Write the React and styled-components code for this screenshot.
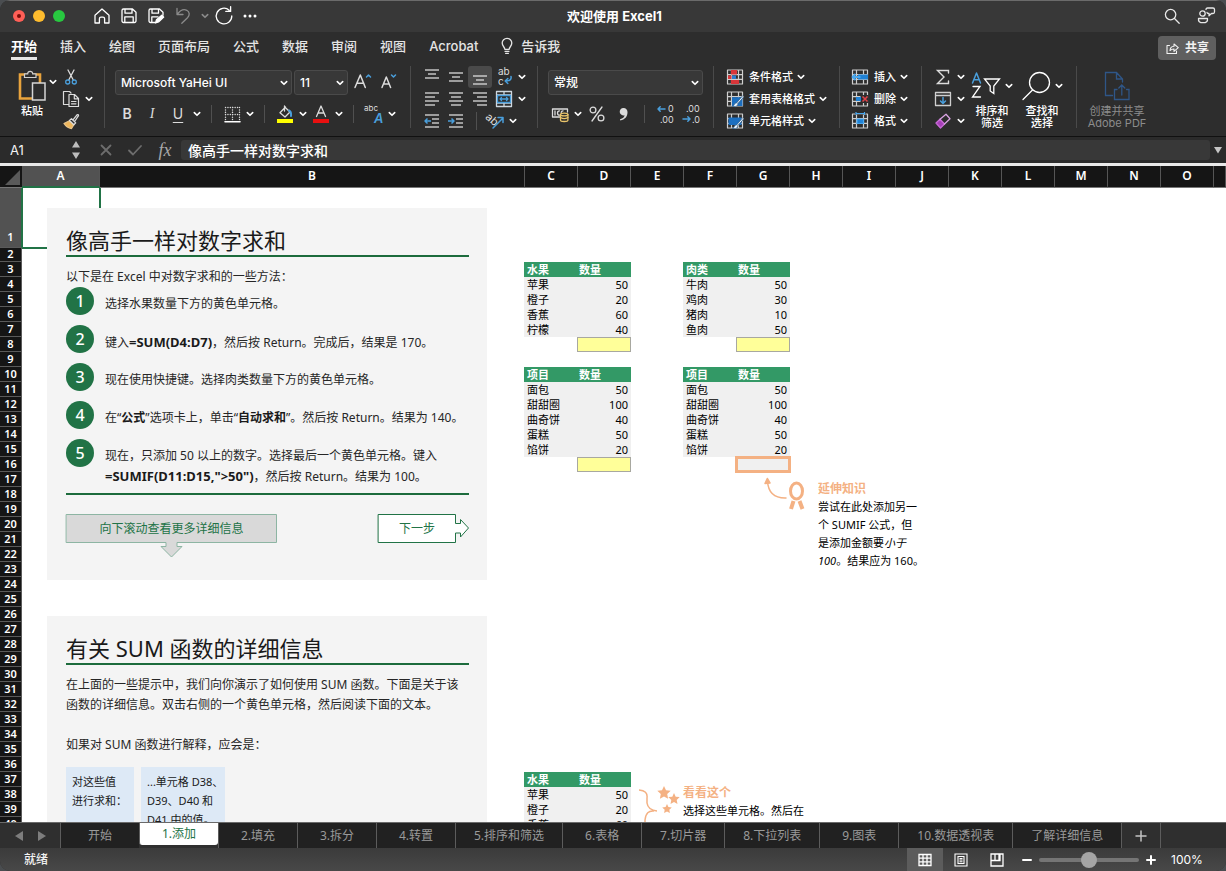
import React from 'react';
import styled, { createGlobalStyle, css } from 'styled-components';

const ui = 'Inter, "Noto Sans CJK SC", sans-serif';
const doc = '"Noto Sans", "Noto Sans CJK SC", sans-serif';
const green = '#217346';
const orange = '#f4b183';
const blue = '#4a9fdc';
const ink = '#dcdcdc';

const GlobalStyle = createGlobalStyle`
  *, *::before, *::after { box-sizing: border-box; }
  body { margin: 0; background: #4a4d50; font-family: ${ui}; }
  button, input, select { font: inherit; color: inherit; margin: 0; }
  button { background: none; border: 0; padding: 0; cursor: default; }
  svg { display: block; flex: none; }
  p, h1, h2, h3, ol { margin: 0; padding: 0; }
`;

const Window = styled.div`
  height: 100vh;
  display: flex;
  flex-direction: column;
  overflow: hidden;
  border-radius: 10px;
  background: #2d2d2d;
  color: #f2f2f2;
`;

/* ---------- title bar ---------- */
const TitleBar = styled.header`
  flex: none;
  height: 32px;
  display: grid;
  grid-template-columns: 1fr auto 1fr;
  align-items: center;
  padding: 0 10px 0 13px;
  background: #383838;
  box-shadow: inset 0 1px #6b6b6b;
`;
const TitleSide = styled.div`
  display: flex;
  align-items: center;
  gap: ${p => p.$gap || 8}px;
  justify-content: ${p => (p.$end ? 'flex-end' : 'flex-start')};
`;
const Title = styled.h1`
  font-size: 13px;
  line-height: 20px;
  font-weight: 700;
  color: #fff;
`;
const Light = styled.button`
  width: 12px;
  height: 12px;
  border-radius: 50%;
  background: ${p => p.$color};
  display: grid;
  place-items: center;
  &::after {
    content: '';
    width: 4px;
    height: 4px;
    border-radius: 50%;
    background: ${p => p.$dot || 'transparent'};
  }
`;
const QuickTools = styled.div`
  display: flex;
  align-items: center;
  gap: 9px;
  margin-left: 20px;
`;
const Tool = styled.button`
  flex: none;
  width: ${p => p.$w || 24}px;
  height: ${p => p.$h || 22}px;
  display: grid;
  place-items: center;
  border-radius: 3px;
  color: ${p => p.$color || ink};
  ${p => p.$on && css`background: #4a4a4a;`}
`;
const Letter = styled.span`
  font-size: 14px;
  line-height: 20px;
  font-weight: ${p => p.$weight || 500};
  font-style: ${p => (p.$italic ? 'italic' : 'normal')};
  font-family: ${p => (p.$serif ? '"Liberation Serif", serif' : ui)};
  text-decoration: ${p => (p.$underline ? 'underline' : 'none')};
  text-underline-offset: 3px;
`;
const FxLabel = styled.span`
  font: italic 18px/20px "Liberation Serif", serif;
`;

/* ---------- ribbon ---------- */
const TabRow = styled.nav`
  flex: none;
  height: 34px;
  display: flex;
  align-items: center;
  justify-content: space-between;
  padding: 0 10px 6px 11px;
`;
const TabList = styled.div`
  display: flex;
  gap: 23px;
`;
const RibbonTab = styled.button`
  display: flex;
  align-items: center;
  gap: 8px;
  height: 28px;
  border-bottom: 3px solid ${p => (p.$on ? '#e6e6e6' : 'transparent')};
  border-top: 3px solid transparent;
  font-size: 13px;
  line-height: 20px;
  font-weight: ${p => (p.$on ? 700 : 500)};
  color: ${p => (p.$on ? '#fff' : '#e4e4e4')};
`;
const ShareButton = styled.button`
  display: flex;
  align-items: center;
  gap: 6px;
  height: 24px;
  margin-top: 4px;
  padding: 0 7px 0 8px;
  border-radius: 4px;
  background: #5f5f5f;
  font-size: 12px;
  line-height: 20px;
  font-weight: 700;
`;
const Ribbon = styled.section`
  flex: none;
  display: flex;
  height: 70px;
`;
const Group = styled.div`
  flex: none;
  display: flex;
  flex-direction: ${p => (p.$column ? 'column' : 'row')};
  width: ${p => p.$w}px;
  padding-left: ${p => p.$pad}px;
`;
const GroupRule = styled.div`
  flex: none;
  width: 1px;
  height: 62px;
  background: #4a4a4a;
`;
const Line = styled.div`
  display: flex;
  align-items: center;
  height: ${p => (p.$tall ? 32 : 22)}px;
`;
const Stack = styled.div`
  display: flex;
  flex-direction: column;
`;
const Rule = styled.i`
  width: 1px;
  height: 18px;
  margin: 0 8px;
  background: #505050;
`;
const BigButton = styled.button`
  display: flex;
  flex-direction: column;
  align-items: center;
  gap: 4px;
  width: ${p => p.$w}px;
  height: 66px;
  padding-top: 4px;
  font-size: 11px;
  line-height: 12px;
  font-weight: ${p => (p.$dim ? 400 : 500)};
  color: ${p => (p.$dim ? '#8c8c8c' : '#fff')};
  white-space: pre-line;
`;
const BigArt = styled.span`
  display: flex;
  align-items: center;
  gap: 4px;
  height: 31px;
`;
const TextTool = styled.button`
  display: flex;
  align-items: center;
  gap: 5px;
  height: 22px;
  font-size: 11px;
  line-height: 16px;
  font-weight: 500;
  color: #fff;
  & > span { display: flex; align-items: center; gap: 4px; }
`;
const Picker = styled.label`
  position: relative;
  flex: none;
  width: ${p => p.$w}px;
  height: 25px;
  margin-right: 2px;
  select {
    appearance: none;
    width: 100%;
    height: 100%;
    padding: 0 18px 0 5px;
    border: 1px solid #4a4a4a;
    border-radius: 3px;
    background: #383838;
    color: #fff;
    font-size: 12px;
    font-weight: 500;
  }
  svg {
    position: absolute;
    right: 4px;
    top: 9px;
    pointer-events: none;
  }
`;

/* ---------- formula bar ---------- */
const FormulaBar = styled.section`
  flex: none;
  display: flex;
  align-items: center;
  height: 27px;
  border-top: 1px solid #111;
  background: #2b2b2b;
`;
const NameBox = styled.input`
  width: 60px;
  height: 24px;
  padding: 0 0 0 10px;
  border: 0;
  background: none;
  font-size: 13px;
`;
const Spinner = styled.button`
  width: 32px;
  height: 24px;
  display: grid;
  place-items: center;
`;
const FormulaInput = styled.input`
  flex: 1;
  min-width: 0;
  height: 20px;
  margin-left: 1px;
  padding: 0 7px;
  border: 0;
  border-radius: 3px;
  background: #383838;
  color: #fff;
  font-size: 14px;
  font-weight: 500;
`;

/* ---------- worksheet ---------- */
const Sheet = styled.main`
  flex: 1;
  min-height: 0;
  display: flex;
  flex-direction: column;
  overflow: hidden;
  border-top: 3px solid #e8e8e8;
  background: #fff;
  color: #000;
  font-family: ${doc};
`;
const ColumnHeads = styled.div`
  flex: none;
  display: flex;
  height: 22px;
  background: #151515;
  border-bottom: 1px solid #777;
`;
const Corner = styled.button`
  width: 22px;
  display: grid;
  place-items: end;
  padding: 0 2px 2px 0;
`;
const ColumnHead = styled.div`
  flex: ${p => (p.$w ? 'none' : '1')};
  width: ${p => (p.$w ? p.$w + 'px' : 'auto')};
  height: 22px;
  border-right: 1px solid #555;
  border-bottom: 2px solid ${p => (p.$on ? green : 'transparent')};
  background: ${p => (p.$on ? '#525252' : 'transparent')};
  background-clip: padding-box;
  color: #fff;
  font-size: 12px;
  line-height: 20px;
  font-weight: 600;
  text-align: center;
`;
const SheetBody = styled.div`
  flex: 1;
  min-height: 0;
  display: flex;
  align-items: flex-start;
`;
const RowHeads = styled.div`
  flex: none;
  width: 22px;
  background: #151515;
`;
const RowHead = styled.div`
  display: flex;
  align-items: flex-end;
  justify-content: center;
  height: ${p => p.$h}px;
  padding-bottom: ${p => (p.$on ? 3 : 0)}px;
  border-bottom: 1px solid #5a5a5a;
  border-right: 1px solid ${p => (p.$on ? green : '#5a5a5a')};
  background: ${p => (p.$on ? '#525252' : 'transparent')};
  color: #fff;
  font-size: 11px;
  line-height: 14px;
  font-weight: 600;
`;
const Cells = styled.div`
  position: relative;
  flex: 1;
  display: flex;
`;
const ActiveCell = styled.div`
  position: absolute;
  left: 0;
  top: 0;
  width: 79px;
  height: 61px;
  border: 2px solid ${green};
  border-top: 0;
  border-left-width: 1px;
`;
const Cards = styled.div`
  position: relative;
  flex: none;
  width: 502px;
  padding: 20px 37px 0 25px;
  display: flex;
  flex-direction: column;
  gap: 36px;
`;
const Card = styled.article`
  background: #f4f4f4;
  padding: 17px 18px 37px 19px;
  color: #262626;
  font-size: 12px;
  line-height: 20px;
`;
const CardTitle = styled.h2`
  margin-bottom: 10px;
  border-bottom: 2px solid #1c6b3c;
  color: #1a1a1a;
  font-size: 22px;
  line-height: 30px;
  font-weight: 400;
`;
const Steps = styled.ol`
  list-style: none;
  display: flex;
  flex-direction: column;
  gap: 10px;
  padding-bottom: 6px;
  border-bottom: 2px solid #1c6b3c;
`;
const Step = styled.li`
  display: flex;
  align-items: flex-start;
  gap: 11px;
  strong { color: #1a1a1a; }
  p { padding-top: 7px; }
`;
const Formula = styled.strong`
  font-size: 13px;
  white-space: nowrap;
`;
const Badge = styled.span`
  flex: none;
  width: 28px;
  height: 28px;
  border-radius: 50%;
  background: ${green};
  color: #fff;
  font-size: 16px;
  line-height: 28px;
  font-weight: 500;
  text-align: center;
`;
const CardActions = styled.div`
  display: flex;
  justify-content: space-between;
  margin-top: 19px;
`;
const ShapeButton = styled.button`
  position: relative;
  width: ${p => p.$w}px;
  height: 29px;
  padding-right: ${p => p.$tail || 0}px;
  color: ${green};
  svg { position: absolute; left: 0; top: 0; }
  span { position: relative; }
`;
const Boxes = styled.div`
  display: flex;
  gap: 7px;
  margin-top: 12px;
`;
const Box = styled.p`
  width: ${p => p.$w}px;
  min-height: 78px;
  padding: 5px 0 5px 6px;
  background: #dde9f6;
  color: #1a1a1a;
  font-size: 11px;
  line-height: 19px;
  white-space: pre-line;
`;
const DataArea = styled.div`
  padding-top: 74px;
  display: flex;
  flex-direction: column;
`;
const DataRow = styled.div`
  display: flex;
  align-items: flex-start;
  gap: ${p => p.$gap}px;
  margin-bottom: 15px;
`;
const Table = styled.table`
  width: 107px;
  table-layout: fixed;
  border-spacing: 0;
  font-size: 11px;
  line-height: 15px;
  th, td { height: 15px; padding: 0 3px; white-space: nowrap; text-align: left; }
  th { background: #339966; color: #fff; font-weight: 700; }
  th:first-child { width: 53px; }
  th + th { padding-left: 2px; }
  td { background: #f0f0f0; }
  td + td { text-align: right; }
`;
const BlankCell = styled.td`
  && { background: #fff; }
`;
const TotalCell = styled.td`
  && { background: ${p => (p.$hint ? '#f0f0f0' : '#ffff99')}; }
  outline: ${p => (p.$hint ? `3px solid ${orange}` : '1px solid #a8a8a0')};
  outline-offset: ${p => (p.$hint ? -2 : -1)}px;
`;
const TipRow = styled.aside`
  display: flex;
  align-items: flex-start;
  gap: 12px;
  height: 285px;
  margin: -11px 0 11px;
  padding: 0 0 0 240px;
`;
const Tip = styled.div`
  padding-top: 3px;
  font-size: 11px;
  line-height: 18px;
  white-space: nowrap;
  h3 { color: ${orange}; font-size: 12px; line-height: 19px; font-weight: 700; }
  em { font-style: italic; }
`;
const LookHere = styled.aside`
  display: flex;
  align-items: flex-start;
  gap: 1px;
  padding-top: 8px;
`;

/* ---------- sheet tabs and status ---------- */
const SheetTabs = styled.nav`
  flex: none;
  display: flex;
  height: 26px;
  border-top: 1px solid #6a6a6a;
  background: #2f2f2f;
`;
const TabArrows = styled.div`
  flex: none;
  width: 60px;
  display: flex;
  align-items: center;
  justify-content: center;
`;
const SheetTab = styled.button`
  flex: none;
  min-width: ${p => p.$min || 79}px;
  height: ${p => (p.$on ? 22 : 25)}px;
  padding: 0 ${p => (p.$plain ? 14 : 18)}px;
  border-left: 1px solid #5c5c5c;
  border-radius: ${p => (p.$on ? '0 0 3px 3px' : '0')};
  background: ${p => (p.$on ? '#fff' : p.$plain ? '#2f2f2f' : '#212121')};
  color: ${p => (p.$on ? green : '#9a9a9a')};
  font-family: ${doc};
  font-size: 12px;
  line-height: 22px;
  display: grid;
  place-items: center;
`;
const TabFill = styled.div`
  flex: 1;
  border-left: 1px solid #5c5c5c;
`;
const StatusBar = styled.footer`
  flex: none;
  display: flex;
  align-items: center;
  justify-content: space-between;
  height: 23px;
  padding: 0 22px 0 24px;
  background: linear-gradient(#3b3b3b, #484848);
  font-size: 12px;
  line-height: 20px;
  font-weight: 500;
`;
const StatusTools = styled.div`
  display: flex;
  align-items: center;
  color: #fff;
`;
const ViewButton = styled.button`
  width: 36px;
  height: 23px;
  display: grid;
  place-items: center;
  background: ${p => (p.$on ? '#5c5c5c' : 'transparent')};
`;
const Zoom = styled.input`
  appearance: none;
  width: 100px;
  height: 16px;
  background: transparent;
  &::-webkit-slider-runnable-track { height: 4px; border-radius: 2px; background: #757575; }
  &::-webkit-slider-thumb {
    appearance: none;
    width: 16px;
    height: 16px;
    margin-top: -6px;
    border-radius: 50%;
    background: #a5a5a5;
  }
`;
const ZoomValue = styled.output`
  margin-left: 8px;
  width: 33px;
  font-weight: 400;
`;

/* ---------- drawings ---------- */
const Svg = ({ w = 18, h = w, children, ...rest }) => (
  <svg width={w} height={h} viewBox={`0 0 ${w} ${h}`} fill="none" stroke="currentColor" overflow="visible"
    strokeWidth="1.3" strokeLinecap="round" strokeLinejoin="round" aria-hidden="true" {...rest}>
    {children}
  </svg>
);
const Chevron = ({ color = '#fff' }) => (
  <Svg w={8} stroke={color} strokeWidth="1.6"><path d="M1.3 2.6 4 5.3l2.7-2.7" /></Svg>
);
const Drop = ({ label, color, w = 12 }) => (
  <Tool $w={w} aria-label={label}><Chevron color={color} /></Tool>
);
const HomeIcon = () => (
  <Svg w={18} stroke="#fff"><path d="M2 8.2 9 2l7 6.200V16h-4.400v-4.200a1.600 1.600 0 0 0-1.600-1.600H8a1.600 1.600 0 0 0-1.600 1.600V16H2z" /></Svg>
);
const SaveIcon = ({ pen }) => (
  <Svg w={18} stroke="#fff">
    <path d={pen ? 'M8 15.5H3.500A1.500 1.500 0 0 1 2 14V3.500A1.500 1.500 0 0 1 3.500 2h9L16 5.200v3M5 2.200v4h6.500v-4M4.800 15.300v-5.500H11' : 'M2 3.500A1.500 1.500 0 0 1 3.500 2h9L16 5.200V14a1.500 1.500 0 0 1-1.500 1.500h-11A1.500 1.500 0 0 1 2 14zM5 2.200v4h7v-4M4.800 15.300v-5.500h8.400v5.500'} />
    {pen && <path d="m8.500 16 1-3.200 5.300-4.600 1.900 1.900-5.200 4.900z" fill="#fff" />}
  </Svg>
);
const UndoIcon = () => (
  <Svg w={18} stroke="#8a8a8a"><path d="M3 1.500v6h6M3.300 7.200C6 3.600 9.800 1.800 12.800 3.300c3.200 1.700 3 5 .7 7.400L7.800 16.300" /></Svg>
);
const RedoIcon = () => (
  <Svg w={20} stroke="#fff"><path d="M17.800 10a7.800 7.800 0 1 1-2.600-5.800M11.800 5.400h4.800V.6" /></Svg>
);
const DotsIcon = () => (
  <Svg w={16} stroke="none" fill="#fff"><circle cx="3" cy="8" r="1.500" /><circle cx="8" cy="8" r="1.500" /><circle cx="13" cy="8" r="1.500" /></Svg>
);
const SearchIcon = () => (
  <Svg w={18} stroke="#e8e8e8"><circle cx="7.600" cy="7.600" r="5.200" /><path d="m11.500 11.500 4.700 4.700" /></Svg>
);
const PresenceIcon = () => (
  <Svg w={20} stroke="#e8e8e8">
    <circle cx="6.500" cy="7.500" r="2.700" />
    <path d="M2.500 12.500h9q.6 4.200-4.500 4.200t-4.500-4.200zM10 3.500q0-1.500 1.500-1.500h5.500q1.500 0 1.500 1.500V6q0 1.500-1.500 1.500h-1.500L13 9.800V7.500q-2 0-2-1" />
  </Svg>
);
const BulbIcon = () => (
  <Svg w={12} h={18}><path d="M3.800 12.300c0-2.300-2.600-3-2.600-6.200a4.800 4.800 0 0 1 9.600 0c0 3.200-2.600 3.900-2.600 6.200zM4 14.300h4M4.600 16.300h2.800" /></Svg>
);
const ShareIcon = () => (
  <Svg w={13} h={14} strokeWidth="1.100"><path d="M3.500 4.500H1v8h9.500V10M4 9.500q.3-4 4-4.200V3l4.300 3.700L8 10.300V8Q5.500 8 4 9.500z" /></Svg>
);
const PasteIcon = () => (
  <Svg w={28} h={31} strokeWidth="1.200" strokeLinejoin="miter">
    <path d="M2 4.500h20v24H2z" stroke="#e8a33d" strokeWidth="2.600" />
    <path d="M6.500 7.500V3.800h3.200a2.500 2.500 0 0 1 5 0h3.300v3.700z" fill="#2d2d2d" stroke="#cfcfcf" />
    <path d="M14.500 13h12.500v17H14.500z" fill="#2d2d2d" stroke="#d6d6d6" strokeWidth="1.500" />
  </Svg>
);
const CutIcon = () => (
  <Svg w={18}><path d="M6 2l5.300 10M12 2 6.700 12" /><g stroke={blue}><circle cx="5.700" cy="14" r="2" /><circle cx="12.300" cy="14" r="2" /></g></Svg>
);
const CopyIcon = () => (
  <Svg w={18}><path d="M7 14.500H1.500v-13h6L9 3M7 4.500h5.500l4 4v8H7zM12.300 4.800v4h4M9.500 11.500h4.500M9.500 13.800h4.500" strokeWidth="1.200" /></Svg>
);
const BrushIcon = () => (
  <Svg w={18}>
    <path d="M2 11.500 8 8.500l4 4-2.500 4q-4.500-.5-7.500-5z" fill="#eeb65c" stroke="#e8c48a" />
    <path d="m7.500 8.500 2-1.800 4.200 4.200-1.900 1.900zM11 7.800l4-5q1.300-.8 1.500.8L12.600 9.500" fill="#2d2d2d" />
  </Svg>
);
const BorderIcon = () => (
  <Svg w={17}><path d="M1.500 1.500h14M1.500 8.500h14M1.500 1.500v12M8.500 1.500v12M15.500 1.500v12" strokeDasharray=".1 2.300" strokeWidth="1.400" /><path d="M1 15.800h15" stroke="#fff" strokeWidth="1.600" /></Svg>
);
const FillIcon = () => (
  <Svg w={18}><path d="M9.500 2 4 7.800 9 12l5-5-4.500-4.200M8.500 1v5" /><path d="M13 5.500q2.500 1 2 5.500" stroke={blue} strokeWidth="2" /><path d="M1 14h16v4H1z" fill="#ffff00" stroke="none" /></Svg>
);
const FontColorIcon = () => (
  <Svg w={18}><path d="M4.500 11.500 9 1l4.500 10.500M6 8h6" /><path d="M1 14h16v4H1z" fill="#e81010" stroke="none" /></Svg>
);
const SizeIcon = ({ down }) => (
  <Svg w={20}>
    <path d={down ? 'M3 15.500 7.300 5l4.300 10.500M4.500 12h5.700' : 'M2 15.500 7.300 3l5 12.500M3.800 11.300h7'} strokeWidth="1.500" />
    <path d={down ? 'm12.500 3 2 2 2-2' : 'm13.500 5 2-2 2 2'} stroke={blue} strokeWidth="1.500" />
  </Svg>
);
const PhoneticIcon = () => (
  <Svg w={20} stroke="none" fill="currentColor">
    <text x="0" y="7" fontSize="8" fontFamily="Inter">abc</text>
    <text x="10" y="19" fontSize="13" fontFamily="Inter" fontStyle="italic" fontWeight="600" fill={blue}>A</text>
  </Svg>
);
const aligns = {
  top: [[1, 15, 1], [4, 12, 5], [1, 15, 9]],
  middle: [[1, 15, 4], [4, 12, 8], [1, 15, 12]],
  bottom: [[1, 15, 7], [4, 12, 11], [1, 15, 15]],
  left: [[1, 15, 2], [1, 11, 6], [1, 15, 10], [1, 11, 14]],
  center: [[1, 15, 2], [3, 13, 6], [1, 15, 10], [3, 13, 14]],
  right: [[1, 15, 2], [5, 15, 6], [1, 15, 10], [5, 15, 14]],
  indent: [[1, 15, 2], [8, 15, 6], [8, 15, 10], [1, 15, 14]],
};
const AlignIcon = ({ kind, arrow }) => (
  <Svg w={16} strokeLinecap="butt">
    {aligns[kind].map(([a, b, y]) => <path key={y} d={`M${a} ${y}h${b - a}`} />)}
    {arrow && <path stroke={blue} strokeWidth="1.500" d={arrow === 'out' ? 'M7 8H1M3.500 5.500 1 8l2.500 2.500' : 'M0 8h6M3.500 5.500 6 8l-2.500 2.500'} />}
  </Svg>
);
const WrapIcon = () => (
  <Svg w={18}>
    <g stroke="none" fill="currentColor" fontFamily="Inter" fontSize="10"><text x="3" y="7">ab</text><text x="3" y="17">c</text></g>
    <path d="M16 8.500q1 4.500-5.500 4.500M12.800 10.500 10.200 13l2.600 2.500" stroke={blue} strokeWidth="1.500" />
  </Svg>
);
const MergeIcon = () => (
  <Svg w={18} stroke="#cfd8e0"><path d="M1.500 1.500h15v15h-15zM1.500 5h15M1.500 13h15M9 1.500V5M9 13v3.500" /><path d="M2.500 5.500h13v7h-13z" fill="#2d2d2d" stroke={blue} /><path d="M5 9h8M6.500 7.500 5 9l1.500 1.500M11.500 7.500 13 9l-1.500 1.500" stroke={blue} /></Svg>
);
const OrientIcon = () => (
  <Svg w={20}>
    <text x="0" y="12" fontSize="11" fontFamily="Inter" stroke="none" fill="currentColor" transform="rotate(42 6 8)">ab</text>
    <path d="m7 17 9.500-9.500M12 6.500h5v5" stroke={blue} strokeWidth="1.500" />
  </Svg>
);
const CurrencyIcon = () => (
  <Svg w={18}>
    <path d="M9 12H1.500V4h15v3M4 6v4M8.500 5.800q-2 0-2 2.200t2 2.200M12 5.800q-1.500 0-1.800 1.500" />
    <path d="M9.500 9.500v5.800q0 1.200 3.700 1.200t3.700-1.200V9.500" fill="#2d2d2d" stroke="#e9c46a" />
    <g stroke="#e9c46a"><ellipse cx="13.200" cy="9.500" rx="3.700" ry="1.400" fill="#2d2d2d" /><path d="M9.500 12.500q3.700 2.200 7.400 0" /></g>
  </Svg>
);
const PercentIcon = () => (
  <Svg w={18}><circle cx="5" cy="5" r="2.900" /><circle cx="13" cy="13" r="2.900" /><path d="M14 2 4 16" /></Svg>
);
const CommaIcon = () => (
  <Svg w={14} h={18} stroke="none" fill="currentColor"><path d="M7.500 3A3.900 3.900 0 0 1 11.500 7.200c0 4.300-2.500 7.300-7.200 8.300l-.3-1.300c3-.8 4.300-2 4.600-4A3.700 3.700 0 1 1 7.500 3z" /></Svg>
);
const DecimalIcon = ({ less }) => (
  <Svg w={20} stroke="none" fill="currentColor">
    <g fontFamily="Inter" fontSize="9">
      <text x={less ? 4 : 12} y="8">{less ? '.00' : '0'}</text>
      <text x={less ? 10 : 4} y="19">{less ? '.0' : '.00'}</text>
    </g>
    <path fill="none" stroke={blue} strokeWidth="1.500" d={less ? 'M1 15h7M5.800 12.800 8 15l-2.200 2.200' : 'M9 5H2M4.200 2.800 2 5l2.200 2.200'} />
  </Svg>
);
const Grid = ({ children, stroke = '#cfcfcf' }) => (
  <Svg w={18} strokeWidth="1.200" stroke={stroke} strokeLinecap="butt">
    <path d="M1.500 2h15v14h-15zM1.500 6.700h15M1.500 11.400h15M5.500 2v14M12.500 2v14" />
    {children}
  </Svg>
);
const CondIcon = () => (
  <Grid><g stroke="none"><path d="M5 2h6v4.500H5zM5 12h8v4H5z" fill="#d8363a" /><path d="M6 7.500h4v3.500H6z" fill="#2a7bd0" /><path d="M2 7.500h3.500v3.500H2z" fill="#d8363a" /></g></Grid>
);
const Pen = () => (
  <path d="M16.800 5.500 10.500 13q-1.300-.3-2 1-.6 2-2.200 2.400 3.500 1 5.200-.9.500-1 .2-1.700l6-6.800" fill="#eaf3fb" stroke="#2d5e8c" strokeWidth=".8" />
);
const TableStyleIcon = () => (
  <Grid><path d="M6 7.200h10.500V16H6z" fill="#1c6fc0" stroke="none" /><Pen /></Grid>
);
const CellStyleIcon = () => (
  <Grid><path d="M2.500 5.500h13V13h-13z" fill="#1c6fc0" stroke="none" /><Pen /></Grid>
);
const InsertIcon = () => (
  <Grid><path d="M7 6.500h10v5H7z" fill="#1f82d6" stroke="none" /><path d="M9.500 9H1.500M4.500 6 1.500 9l3 3" stroke="#4aa8ee" strokeWidth="1.800" /></Grid>
);
const DeleteIcon = () => (
  <Grid><path d="M9.500 5h8v8h-8z" fill="#2d2d2d" stroke="none" /><path d="M5 7h5v4H5z" fill="#1f82d6" stroke="none" /><path d="m11.500 6.500 5 5M16.500 6.500l-5 5" stroke="#e0434a" strokeWidth="1.600" /></Grid>
);
const FormatIcon = () => (
  <Grid><path d="M6 7h6.500v4.500H6z" fill="#1f82d6" stroke="#4aa8ee" /><path d="M4 1h10.500" stroke="#2d2d2d" strokeWidth="3" /><path d="M5 1.500h8.500M5 0v3M13.500 0v3" stroke="#4aa8ee" /></Grid>
);
const SumIcon = () => (
  <Svg w={16} strokeLinejoin="miter"><path d="M13.500 4V1.500h-11L9 8l-6.500 6.500h11V12" strokeWidth="1.400" /></Svg>
);
const FillDownIcon = () => (
  <Svg w={18} stroke="#cfcfcf"><path d="M1.500 2.500h15v13h-15zM1.500 5.500h15" /><path d="M9 7.500v6M6.500 11 9 13.500l2.500-2.500" stroke={blue} strokeWidth="1.500" /></Svg>
);
const EraserIcon = () => (
  <Svg w={18}><path d="m2 11 4.500 5 4-4L6 7.200z" fill="#a63fb8" stroke="#c86bd6" /><path d="m6 7.200 6-5 4 4.500-5.500 5.300" stroke="#d9a3e2" /></Svg>
);
const SortIcon = () => (
  <Svg w={30} h={30}>
    <path d="M1.500 12 5.500 2l4 10M3 8.700h5" stroke={blue} strokeWidth="1.500" />
    <path d="M2 15.500h7L1.500 26h8M13.500 8h15l-5.700 7v7.500l-3.600-2.500v-5z" strokeLinejoin="miter" />
  </Svg>
);
const FindIcon = () => (
  <Svg w={30} h={30}><circle cx="18.500" cy="11.500" r="10" /><path d="M11.500 19 2 28.500" /></Svg>
);
const PdfIcon = () => (
  <Svg w={26} h={30} stroke="#2f5687" strokeLinejoin="miter">
    <path d="M8.500 24.500H1.500v-23h11l6 6.500v3M12.500 1.500V8h6M13 18.500h-2.500v10H25v-10h-2.500M17.800 24v-9.500M14.800 17l3-3 3 3" />
  </Svg>
);
const UpDownIcon = () => (
  <Svg w={10} h={20} stroke="none" fill="#bdbdbd"><path d="M5 1l4 6.500H1zM5 19l4-6.500H1z" /></Svg>
);
const XIcon = () => (
  <Svg w={14} stroke="#6d6d6d" strokeWidth="1.800"><path d="m2.500 2.500 9 9M11.500 2.500l-9 9" /></Svg>
);
const CheckIcon = () => (
  <Svg w={16} stroke="#6d6d6d" strokeWidth="1.800"><path d="m2 8.500 4 4 8-8.500" /></Svg>
);
const Triangle = ({ d, w = 10, color = '#7d7d7d' }) => (
  <Svg w={w} stroke="none" fill={color}><path d={d} /></Svg>
);
const TipArt = () => (
  <Svg w={42} h={36} stroke={orange} strokeWidth="1.500">
    <path d="M3.500 5q1 17.500 18.500 17" /><path d="M1 7.500l2.300-5L6 7z" fill={orange} />
    <ellipse cx="32.500" cy="15" rx="6" ry="8" strokeWidth="3" />
    <path d="M29.500 25 27 33M35.500 25l3 8" strokeWidth="4" strokeLinecap="butt" />
  </Svg>
);
const BraceArt = () => (
  <Svg w={20} h={80} stroke={orange} strokeWidth="1.500" strokeLinecap="butt"><path d="M1 10q9 .5 8 8v5q1 7 10 8M16 31q-8-1-9 9v10q0 10-7 10" /></Svg>
);
const star = (x, y, r) =>
  Array.from({ length: 10 }, (_, i) => {
    const k = i % 2 ? r * 0.48 : r;
    const a = -Math.PI / 2 + (i * Math.PI) / 5;
    return `${(x + k * Math.cos(a)).toFixed(1)},${(y + k * Math.sin(a)).toFixed(1)}`;
  }).join(' ');
const StarsArt = () => (
  <Svg w={23} h={36} stroke="none" fill={orange}><polygon points={star(5, 13, 7)} /><polygon points={star(15, 19, 6)} /><polygon points={star(8, 29, 5)} /></Svg>
);
const NormalView = () => (
  <Svg w={14} strokeLinecap="butt" strokeLinejoin="miter"><path d="M1 1.500h12v11H1zM5 1.500v11M9 1.500v11M1 5.200h12M1 8.900h12" /></Svg>
);
const LayoutView = () => (
  <Svg w={14} strokeLinecap="butt" strokeLinejoin="miter"><path d="M1 1h12v12H1zM4 3.500h6v7H4zM5.500 5.500h3M5.500 7h3M5.500 8.700h3" strokeWidth="1.100" /></Svg>
);
const BreakView = () => (
  <Svg w={14} strokeLinecap="butt" strokeLinejoin="miter"><path d="M1 1h12v12H1zM5 1v6M9 1v6M1 7.500h9V1" /></Svg>
);

/* ---------- data ---------- */
const tabs = ['开始', '插入', '绘图', '页面布局', '公式', '数据', '审阅', '视图', 'Acrobat'];
const columns = ['C', 'D', 'E', 'F', 'G', 'H', 'I', 'J', 'K', 'L', 'M', 'N', 'O'];
const sheetTabs = ['开始', '1.添加', '2.填充', '3.拆分', '4.转置', '5.排序和筛选', '6.表格', '7.切片器', '8.下拉列表', '9.图表', '10.数据透视表', '了解详细信息'];
const fruit = [['苹果', 50], ['橙子', 20], ['香蕉', 60], ['柠檬', 40]];
const meat = [['牛肉', 50], ['鸡肉', 30], ['猪肉', 10], ['鱼肉', 50]];
const items = [['面包', 50], ['甜甜圈', 100], ['曲奇饼', 40], ['蛋糕', 50], ['馅饼', 20]];

const DataTable = ({ name, rows, hint }) => (
  <Table>
    <thead><tr><th scope="col">{name}</th><th scope="col">数量</th></tr></thead>
    <tbody>
      {rows.map(([label, n]) => <tr key={label}><td>{label}</td><td>{n}</td></tr>)}
      <tr><BlankCell /><TotalCell $hint={hint} /></tr>
    </tbody>
  </Table>
);

const Menu = ({ icon, children }) => (
  <TextTool>{icon}<span>{children}<Chevron /></span></TextTool>
);

const Select = ({ label, w, value }) => (
  <Picker $w={w}>
    <select aria-label={label} defaultValue={value}><option>{value}</option></select>
    <Chevron />
  </Picker>
);

function RibbonTools() {
  return (
    <Ribbon>
      <Group $w={104} $pad={17}>
        <BigButton $w={30}><BigArt><PasteIcon /></BigArt>粘贴</BigButton>
        <Line $tall><Drop label="粘贴选项" /></Line>
        <Stack>
          <Line><Tool aria-label="剪切"><CutIcon /></Tool></Line>
          <Line><Tool aria-label="复制"><CopyIcon /></Tool><Drop label="复制选项" /></Line>
          <Line><Tool aria-label="格式刷"><BrushIcon /></Tool></Line>
        </Stack>
      </Group>
      <GroupRule />
      <Group $w={305} $pad={10} $column>
        <Line $tall>
          <Select label="字体" w={177} value="Microsoft YaHei UI" />
          <Select label="字号" w={54} value="11" />
          <Tool $w={26} aria-label="增大字号"><SizeIcon /></Tool>
          <Tool $w={26} aria-label="减小字号"><SizeIcon down /></Tool>
        </Line>
        <Line $tall>
          <Tool $w={24} aria-label="加粗"><Letter $weight={600}>B</Letter></Tool>
          <Tool $w={26} aria-label="倾斜"><Letter $serif $italic>I</Letter></Tool>
          <Tool $w={26} aria-label="下划线"><Letter $weight={400} $underline>U</Letter></Tool>
          <Drop label="下划线选项" /><Rule />
          <Tool aria-label="边框"><BorderIcon /></Tool><Drop label="边框选项" /><Rule />
          <Tool aria-label="填充颜色"><FillIcon /></Tool><Drop label="填充颜色选项" />
          <Tool aria-label="字体颜色"><FontColorIcon /></Tool><Drop label="字体颜色选项" /><Rule />
          <Tool aria-label="拼音"><PhoneticIcon /></Tool><Drop label="拼音选项" />
        </Line>
      </Group>
      <GroupRule />
      <Group $w={126} $pad={9} $column>
        <Line>
          <Tool aria-label="顶端对齐"><AlignIcon kind="top" /></Tool>
          <Tool aria-label="垂直居中"><AlignIcon kind="middle" /></Tool>
          <Tool $on aria-label="底端对齐"><AlignIcon kind="bottom" /></Tool>
          <Tool aria-label="自动换行"><WrapIcon /></Tool><Drop label="换行选项" />
        </Line>
        <Line>
          <Tool aria-label="左对齐"><AlignIcon kind="left" /></Tool>
          <Tool aria-label="居中"><AlignIcon kind="center" /></Tool>
          <Tool aria-label="右对齐"><AlignIcon kind="right" /></Tool>
          <Tool aria-label="合并"><MergeIcon /></Tool><Drop label="合并选项" />
        </Line>
        <Line>
          <Tool aria-label="减少缩进"><AlignIcon kind="indent" arrow="out" /></Tool>
          <Tool aria-label="增加缩进"><AlignIcon kind="indent" arrow="in" /></Tool>
          <Rule />
          <Tool $w={22} aria-label="方向"><OrientIcon /></Tool><Drop label="方向选项" />
        </Line>
      </Group>
      <GroupRule />
      <Group $w={175} $pad={10} $column>
        <Line $tall><Select label="数字格式" w={155} value="常规" /></Line>
        <Line $tall>
          <Tool aria-label="货币"><CurrencyIcon /></Tool><Drop label="货币选项" />
          <Tool $w={26} aria-label="百分比"><PercentIcon /></Tool>
          <Tool $w={26} aria-label="千位分隔"><CommaIcon /></Tool>
          <Rule />
          <Tool $w={26} aria-label="增加小数位"><DecimalIcon /></Tool>
          <Tool $w={26} aria-label="减少小数位"><DecimalIcon less /></Tool>
        </Line>
      </Group>
      <GroupRule />
      <Group $w={125} $pad={12} $column>
        <Menu icon={<CondIcon />}>条件格式</Menu>
        <Menu icon={<TableStyleIcon />}>套用表格格式</Menu>
        <Menu icon={<CellStyleIcon />}>单元格样式</Menu>
      </Group>
      <GroupRule />
      <Group $w={81} $pad={11} $column>
        <Menu icon={<InsertIcon />}>插入</Menu>
        <Menu icon={<DeleteIcon />}>删除</Menu>
        <Menu icon={<FormatIcon />}>格式</Menu>
      </Group>
      <GroupRule />
      <Group $w={154} $pad={9}>
        <Stack>
          <Line><Tool aria-label="自动求和"><SumIcon /></Tool><Drop label="求和选项" /></Line>
          <Line><Tool aria-label="填充"><FillDownIcon /></Tool><Drop label="填充选项" /></Line>
          <Line><Tool aria-label="清除"><EraserIcon /></Tool><Drop label="清除选项" /></Line>
        </Stack>
        <BigButton $w={50}><BigArt><SortIcon /><Chevron /></BigArt>{'排序和\n筛选'}</BigButton>
        <BigButton $w={50}><BigArt><FindIcon /><Chevron /></BigArt>{'查找和\n选择'}</BigButton>
      </Group>
      <GroupRule />
      <Group $w={80} $pad={10}>
        <BigButton $w={60} $dim><BigArt><PdfIcon /></BigArt>{'创建并共享\nAdobe PDF'}</BigButton>
      </Group>
    </Ribbon>
  );
}

function SumCard() {
  return (
    <Card>
      <CardTitle>像高手一样对数字求和</CardTitle>
      <p>以下是在 Excel 中对数字求和的一些方法：</p>
      <Steps>
        <Step><Badge>1</Badge><p>选择水果数量下方的黄色单元格。</p></Step>
        <Step><Badge>2</Badge><p>键入<Formula>=SUM(D4:D7)</Formula>，然后按 Return。完成后，结果是 170。</p></Step>
        <Step><Badge>3</Badge><p>现在使用快捷键。选择肉类数量下方的黄色单元格。</p></Step>
        <Step><Badge>4</Badge><p>在“<strong>公式</strong>”选项卡上，单击“<strong>自动求和</strong>”。然后按 Return。结果为 140。</p></Step>
        <Step><Badge>5</Badge><p>现在，只添加 50 以上的数字。选择最后一个黄色单元格。键入 <Formula>=SUMIF(D11:D15,"&gt;50")</Formula>，然后按 Return。结果为 100。</p></Step>
      </Steps>
      <CardActions>
        <ShapeButton $w={211}>
          <Svg w={211} h={44} stroke="#8db5a3" strokeWidth="1" fill="#d9d9d9" strokeLinejoin="miter">
            <path d="M.5.500h210v28H111v4h5L105.500 43 95 32.500h5v-4H.5z" />
          </Svg>
          <span>向下滚动查看更多详细信息</span>
        </ShapeButton>
        <ShapeButton $w={91} $tail={13}>
          <Svg w={91} h={29} stroke={green} strokeWidth="1" fill="#fff" strokeLinejoin="miter">
            <path d="M.5.500h77v9h5v-4L90.500 14l-8 9v-4h-5v9.500H.5z" />
          </Svg>
          <span>下一步</span>
        </ShapeButton>
      </CardActions>
    </Card>
  );
}

export default function App() {
  return (
    <Window lang="zh-CN">
      <GlobalStyle />
      <TitleBar>
        <TitleSide>
          <Light $color="#ff5f57" $dot="#7a0c08" aria-label="关闭" />
          <Light $color="#febc2e" aria-label="最小化" />
          <Light $color="#28c840" aria-label="缩放" />
          <QuickTools>
            <Tool $w={18} aria-label="主页"><HomeIcon /></Tool>
            <Tool $w={18} aria-label="保存"><SaveIcon /></Tool>
            <Tool $w={18} aria-label="另存为"><SaveIcon pen /></Tool>
            <Tool $w={18} aria-label="撤消"><UndoIcon /></Tool>
            <Drop w={4} label="撤消选项" color="#8a8a8a" />
            <Tool $w={18} aria-label="重做"><RedoIcon /></Tool>
            <Tool $w={18} aria-label="更多"><DotsIcon /></Tool>
          </QuickTools>
        </TitleSide>
        <Title>欢迎使用 Excel1</Title>
        <TitleSide $end $gap={14}>
          <Tool $w={20} aria-label="搜索"><SearchIcon /></Tool>
          <Tool $w={20} aria-label="状态"><PresenceIcon /></Tool>
        </TitleSide>
      </TitleBar>
      <TabRow>
        <TabList>
          {tabs.map((t, i) => <RibbonTab key={t} $on={i === 0}>{t}</RibbonTab>)}
          <RibbonTab><BulbIcon />告诉我</RibbonTab>
        </TabList>
        <ShareButton><ShareIcon />共享</ShareButton>
      </TabRow>
      <RibbonTools />
      <FormulaBar>
        <NameBox aria-label="名称框" defaultValue="A1" />
        <Spinner aria-label="名称列表"><UpDownIcon /></Spinner>
        <Tool $w={28} aria-label="取消"><XIcon /></Tool>
        <Tool $w={30} aria-label="输入"><CheckIcon /></Tool>
        <Tool $w={30} $color="#a8a8a8" aria-label="插入函数"><FxLabel>fx</FxLabel></Tool>
        <FormulaInput aria-label="编辑栏" defaultValue="像高手一样对数字求和" />
        <Tool $w={16} aria-label="展开编辑栏"><Triangle d="M1 2h8L5 8.500z" color="#c4c4c4" /></Tool>
      </FormulaBar>
      <Sheet>
        <ColumnHeads>
          <Corner aria-label="全选"><Triangle w={16} d="M16 1v15H1z" color="#5a5a5a" /></Corner>
          <ColumnHead $w={78} $on>A</ColumnHead>
          <ColumnHead $w={425}>B</ColumnHead>
          {columns.map(c => <ColumnHead key={c} $w={53}>{c}</ColumnHead>)}
          <ColumnHead />
        </ColumnHeads>
        <SheetBody>
          <RowHeads>
            {Array.from({ length: 40 }, (_, i) => (
              <RowHead key={i} $on={i === 0} $h={i === 0 ? 60 : i === 1 ? 14 : 15}>{i + 1}</RowHead>
            ))}
          </RowHeads>
          <Cells>
            <ActiveCell />
            <Cards>
              <SumCard />
              <Card>
                <CardTitle>有关 SUM 函数的详细信息</CardTitle>
                <p>在上面的一些提示中，我们向你演示了如何使用 SUM 函数。下面是关于该函数的详细信息。双击右侧的一个黄色单元格，然后阅读下面的文本。</p>
                <br />
                <p>如果对 SUM 函数进行解释，应会是：</p>
                <Boxes>
                  <Box $w={68}>{'对这些值\n进行求和：'}</Box>
                  <Box $w={84}>{'...单元格 D38、\nD39、D40 和\nD41 中的值。'}</Box>
                </Boxes>
              </Card>
            </Cards>
            <DataArea>
              <DataRow $gap={52}><DataTable name="水果" rows={fruit} /><DataTable name="肉类" rows={meat} /></DataRow>
              <DataRow $gap={52}><DataTable name="项目" rows={items} /><DataTable name="项目" rows={items} hint /></DataRow>
              <TipRow>
                <TipArt />
                <Tip>
                  <h3>延伸知识</h3>
                  <p>尝试在此处添加另一<br />个 SUMIF 公式，但<br />是添加金额要<em>小于<br />100</em>。结果应为 160。</p>
                </Tip>
              </TipRow>
              <DataRow $gap={7}>
                <DataTable name="水果" rows={fruit} />
                <LookHere>
                  <BraceArt />
                  <StarsArt />
                  <Tip><h3>看看这个</h3><p>选择这些单元格。然后在</p></Tip>
                </LookHere>
              </DataRow>
            </DataArea>
          </Cells>
        </SheetBody>
      </Sheet>
      <SheetTabs>
        <TabArrows>
          <Tool $w={23} aria-label="上一张"><Triangle d="M9 0v10L1 5z" /></Tool>
          <Tool $w={23} aria-label="下一张"><Triangle d="M1 0v10L9 5z" /></Tool>
        </TabArrows>
        {sheetTabs.map((t, i) => <SheetTab key={t} $on={i === 1}>{t}</SheetTab>)}
        <SheetTab $plain $min={38} aria-label="新建工作表">
          <Svg w={10} stroke="#c4c4c4" strokeWidth="1.500"><path d="M5 0v10M0 5h10" /></Svg>
        </SheetTab>
        <TabFill />
      </SheetTabs>
      <StatusBar>
        <span>就绪</span>
        <StatusTools>
          <ViewButton $on aria-label="普通"><NormalView /></ViewButton>
          <ViewButton aria-label="页面布局视图"><LayoutView /></ViewButton>
          <ViewButton aria-label="分页预览"><BreakView /></ViewButton>
          <Tool aria-label="缩小"><Svg w={10} stroke="#fff" strokeWidth="2"><path d="M1 5h8" /></Svg></Tool>
          <Zoom type="range" min="0" max="100" defaultValue="50" aria-label="缩放比例" />
          <Tool aria-label="放大"><Svg w={10} stroke="#fff" strokeWidth="2"><path d="M5 1v8M1 5h8" /></Svg></Tool>
          <ZoomValue>100%</ZoomValue>
        </StatusTools>
      </StatusBar>
    </Window>
  );
}
